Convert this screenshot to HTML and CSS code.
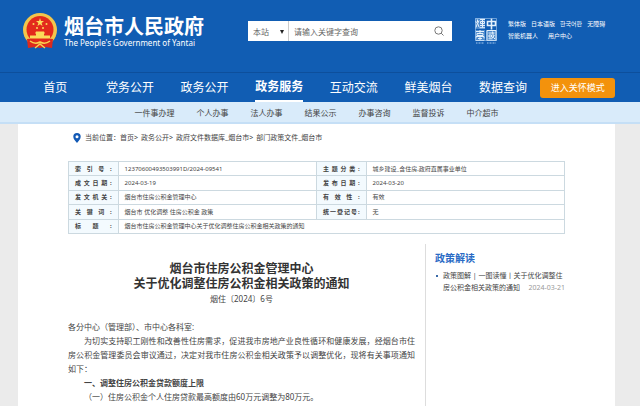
FILE: index.html
```html
<!DOCTYPE html>
<html lang="zh-CN">
  <head>
    <meta charset="UTF-8" />
    <meta name="viewport" content="width=device-width, initial-scale=1" />
    <title>烟台市人民政府</title>
    <link rel="stylesheet" href="styles.css">
  </head>

  <body>
    <header class="header">
      <div class="top wrap">
        <a class="logo" href="#">
          <svg class="emblem" viewBox="0 0 34 36" aria-hidden="true">
            <circle cx="17" cy="17" r="17" fill="#f3c64b" />
            <circle cx="17" cy="16.500" r="13.500" fill="#e32a1c" />
            <path d="M17 5 L18 8 L21 8 L18.600 10 L19.500 13 L17 11.200 L14.500 13 L15.400 10 L13 8 L16 8 Z" fill="#fbdc5a" />
            <g fill="#fbdc5a">
              <circle cx="10.500" cy="11" r="1" />
              <circle cx="23.500" cy="11" r="1" />
              <circle cx="14" cy="15" r="1" />
              <circle cx="20" cy="15" r="1" />
              <path d="M13 18.500h8l1 2h-10zM13 20.500h8v2h6v3H7v-3h6z" />
            </g>
            <path d="M4 26 Q10 25 13 28 L17 30 L21 28 Q24 25 30 26 L29 35 L22 34 L17 35 L12 34 L5 35 Z" fill="#dc2a1d" />
            <path d="M7 28 Q12 32 17 29 Q22 32 27 28 M12 35 L17 31 L22 35" fill="none" stroke="#f8d34f" stroke-width="1.500" />
          </svg>
          <span class="logo-text">
            <span class="logo-cn">烟台市人民政府</span>
            <span class="logo-en">The People's Government of Yantai</span>
          </span>
        </a>

        <form class="search">
          <select class="search-scope" aria-label="搜索范围">
            <option>本站</option>
          </select>
          <svg class="caret" viewBox="0 0 4 4" aria-hidden="true"><path d="M0 0h4L2 4z" fill="#222" /></svg>
          <input class="search-input" type="text" placeholder="请输入关键字查询" aria-label="关键字" />
          <button class="search-btn" type="button" aria-label="搜索">
            <svg viewBox="0 0 10 10" fill="none" stroke="#777" stroke-width="1"><circle cx="4.500" cy="4.500" r="3.700" /><path d="M7.200 7.200L9.500 9.500" /></svg>
          </button>
        </form>

        <div class="tools">
          <svg class="seal" viewBox="0 0 22 26" role="img" aria-label="煙臺中國">
            <path d="M0 0h10v11H0zM0 12h10v11H0zM11 12h11v11H11z" fill="#9cc4ee" fill-opacity="0.45" />
            <!-- four seal characters, top row then bottom row -->
            <g fill="none" stroke="#e4f0fb" stroke-width="1">
              <path d="M2.500 1.500v3M0.500 3l1 2M4 2.500L3 5M1 9.500L2.500 5l1.500 4M5 1.500h5M5.500 3.500h4v2h-4zM7.500 1.500v8M5 7.500h5M4.500 9.700h5.500" />
              <path d="M12.500 3.500h8v4h-8zM16.500 0.500v11" stroke-width="1.600" />
              <path d="M1 13.500h8M5 12v3M2 15.500h6v2H2zM1 20.500v-2h8v2M3 20.500h4M5 19v3.500M1 22.500h8" />
              <path d="M12 12.500h9v10h-9zM13.500 15h6M14 17h2.500v2H14zM13.500 20.800h4M17.500 13.500l1 6 1.500 1.500M19.500 17L17 20" />
            </g>
            <path d="M0.500 0.500h21v22h-21z" fill="none" stroke="#a9cbef" stroke-width="0.600" />
            <path d="M1 25h8M12 25h9" stroke="#a9cbef" stroke-dasharray="1 0.500" />
          </svg>
          <div class="links">
            <div class="links-row">
              <a href="#">繁体版</a>
              <a href="#">日本语版</a>
              <a href="#">한국어판</a>
              <a href="#">无障碍</a>
            </div>
            <div class="links-row links-wide">
              <a href="#">智能机器人</a>
              <a href="#">用户中心</a>
            </div>
          </div>
        </div>
      </div>

      <nav class="nav">
        <div class="nav-list wrap">
          <a href="#">首页</a>
          <a href="#">党务公开</a>
          <a href="#">政务公开</a>
          <a class="active" href="#">政务服务</a>
          <a href="#">互动交流</a>
          <a href="#">鲜美烟台</a>
          <a href="#">数据查询</a>
          <button class="care-btn" type="button">进入关怀模式</button>
        </div>
      </nav>
    </header>

    <nav class="subnav">
      <div class="subnav-list wrap">
        <a href="#">一件事办理</a>
        <a href="#">个人办事</a>
        <a href="#">法人办事</a>
        <a href="#">结果公示</a>
        <a href="#">办事咨询</a>
        <a href="#">监督投诉</a>
        <a href="#">中介超市</a>
      </div>
    </nav>

    <main class="page">
      <div class="crumbs">
        <svg class="pin" viewBox="0 0 8 10" aria-hidden="true"><path d="M4 0a3.700 3.700 0 0 1 3.700 3.700C7.700 6 5.500 8 4 10C2.500 8 0.300 6 0.300 3.700A3.700 3.700 0 0 1 4 0z" fill="#1259b5" /><circle cx="4" cy="3.700" r="1.500" fill="#fff" /></svg>
        <div class="crumbs-path">
          <span>当前位置：<a href="#">首页</a>&gt;</span>
          <span><a href="#">政务公开</a>&gt;</span>
          <span><a href="#">政府文件数据库_烟台市</a>&gt;</span>
          <a href="#">部门政策文件_烟台市</a>
        </div>
      </div>

      <table class="info">
        <tr>
          <th scope="row">索 引 号 :</th>
          <td>12370600493503991D/2024-09541</td>
          <th scope="row">主 题 分 类 :</th>
          <td>城乡建设_含住房,政府直属事业单位</td>
        </tr>
        <tr>
          <th scope="row">成 文 日 期 :</th>
          <td>2024-03-19</td>
          <th scope="row">发 布 日 期 :</th>
          <td>2024-03-20</td>
        </tr>
        <tr>
          <th scope="row">发 文 机 关 :</th>
          <td>烟台市住房公积金管理中心</td>
          <th scope="row">有 效 性 :</th>
          <td>有效</td>
        </tr>
        <tr>
          <th scope="row">关 键 词 :</th>
          <td>烟台市 优化调整 住房公积金 政策</td>
          <th scope="row">统一登记号:</th>
          <td>无</td>
        </tr>
        <tr>
          <th scope="row">标 题 :</th>
          <td colspan="3">烟台市住房公积金管理中心关于优化调整住房公积金相关政策的通知</td>
        </tr>
      </table>

      <div class="content">
        <article class="article">
          <h1>烟台市住房公积金管理中心<br />关于优化调整住房公积金相关政策的通知</h1>
          <p class="doc-no">烟住〔2024〕6号</p>
          <p>各分中心（管理部）、市中心各科室:</p>
          <p class="indent">为切实支持职工刚性和改善性住房需求，促进我市房地产业良性循环和健康发展，经烟台市住房公积金管理委员会审议通过，决定对我市住房公积金相关政策予以调整优化，现将有关事项通知如下：</p>
          <p class="indent"><b>一、调整住房公积金贷款额度上限</b></p>
          <p class="indent">（一）住房公积金个人住房贷款最高额度由60万元调整为80万元。</p>
        </article>

        <aside class="side">
          <h2>政策解读</h2>
          <ul>
            <li><a href="#">政策图解 | 一图读懂丨关于优化调整住房公积金相关政策的通知</a><span class="date">2024-03-21</span></li>
          </ul>
        </aside>
      </div>
    </main>
  </body>
</html>
```

FILE: styles.css
```css
* {
  box-sizing: border-box;
}

body {
  margin: 0;
  min-height: 100vh;
  display: flex;
  flex-direction: column;
  background: #ebebeb;
  color: #444;
  font-family: "Noto Sans", "Noto Sans CJK SC", "Noto Sans CJK KR", sans-serif;
  font-size: 8px;
  line-height: 14px;
}

a {
  color: inherit;
  text-decoration: none;
}

button,
input,
select {
  font-family: inherit;
  border: 0;
  padding: 0;
  margin: 0;
}

.wrap {
  margin: 0 25px 0 18px;
}

/* header */
.header {
  background: #115db3;
  color: #fff;
}

.top {
  height: 72px;
  padding: 13px 8px 0 5px;
  display: flex;
  align-items: flex-start;
}

.logo {
  display: flex;
  gap: 7px;
  width: 225px;
}

.emblem {
  width: 34px;
  height: 36px;
}

.logo-text {
  display: flex;
  flex-direction: column;
  padding-top: 2px;
  white-space: nowrap;
}

.logo-cn {
  font-size: 20px;
  line-height: 24px;
  font-weight: bold;
}

.logo-en {
  font-size: 8px;
  line-height: 8px;
}

.search {
  position: relative;
  flex: 1;
  height: 20px;
  margin-top: 8px;
  display: flex;
  background: #fff;
}

.search-scope {
  appearance: none;
  width: 41px;
  padding-left: 5px;
  background: transparent;
  border-right: 1px solid #ccc;
  border-radius: 0;
  color: #666;
  font-size: 8px;
}

.caret {
  position: absolute;
  left: 32px;
  top: 9px;
  width: 4px;
  height: 4px;
  pointer-events: none;
}

.search-input {
  flex: 1;
  min-width: 0;
  padding-left: 5px;
  background: transparent;
  font-size: 8px;
}

.search-input::placeholder {
  color: #666;
}

.search-btn {
  width: 26px;
  display: flex;
  align-items: center;
  justify-content: center;
  background: transparent;
}

.search-btn svg {
  width: 10px;
  height: 10px;
}

.tools {
  display: flex;
  gap: 11px;
  width: 155px;
  padding-top: 5px;
  padding-left: 23px;
}

.seal {
  flex: none;
  width: 22px;
  height: 26px;
}

.links {
  font-size: 6px;
  line-height: 12px;
  white-space: nowrap;
}

.links-row {
  display: flex;
  gap: 5px;
}

.links-wide {
  gap: 10px;
}

.nav {
  border-top: 1px solid #0d4f9c;
}

.nav-list {
  height: 29px;
  display: grid;
  grid-template-columns: repeat(8, 1fr);
  justify-items: center;
  align-items: center;
  font-size: 12px;
}

.nav-list a {
  line-height: 29px;
}

.nav-list .active {
  font-weight: bold;
  border-bottom: 2px solid #fff;
  line-height: 27px;
}

.care-btn {
  width: 100%;
  height: 20px;
  border-radius: 3px;
  background: #f3920c;
  color: #fff;
  font-size: 9px;
}

.subnav {
  background: #d9ebfa;
  border-bottom: 2px solid #c5dff6;
}

.subnav-list {
  height: 20px;
  display: flex;
  justify-content: center;
  gap: 22px;
  line-height: 21px;
}

/* page */
.page {
  flex: 1;
  display: flex;
  flex-direction: column;
  margin: 0 25px 0 18px;
  padding: 7px 50px 0;
  background: #fff;
}

.crumbs {
  display: flex;
  align-items: center;
  gap: 4px;
  padding-left: 5px;
  margin-bottom: 16px;
  font-size: 7px;
}

.crumbs-path {
  display: flex;
  gap: 3px;
}

.pin {
  width: 8px;
  height: 10px;
}

.info {
  width: 100%;
  height: 73px;
  table-layout: fixed;
  border-collapse: collapse;
  font-size: 6px;
  line-height: 10px;
}

.info th,
.info td {
  border: 1px solid #ccd9e0;
  padding: 0 6px;
  text-align: left;
}

.info th {
  width: 10%;
  background: #f3fafe;
  white-space: nowrap;
  text-align-last: justify;
}

.content {
  flex: 1;
  display: flex;
  margin-top: 10px;
}

.article {
  flex: 1;
  padding: 17px 10px 0 0;
  text-align: justify;
}

.article h1 {
  margin: 0;
  color: #333;
  font-size: 12px;
  line-height: 15px;
  text-align: center;
}

.article p {
  margin: 0;
}

.article .doc-no {
  margin: 1px 0 14px;
  text-align: center;
}

.article .indent {
  text-indent: 2em;
}

.side {
  width: 140px;
  padding: 7px 0 0 9px;
  border-left: 1px solid #ddd;
}

.side h2 {
  margin: 0 0 5px;
  color: #2a6bc5;
  font-size: 10px;
  line-height: 14px;
}

.side ul {
  margin: 0;
  padding-left: 8px;
  list-style: none;
  font-size: 7px;
  line-height: 12px;
}

.side li::before {
  content: "";
  float: left;
  width: 2px;
  height: 2px;
  margin: 5px 0 0 -7px;
  background: #3a6aa8;
}

.date {
  float: right;
  color: #999;
}
```
